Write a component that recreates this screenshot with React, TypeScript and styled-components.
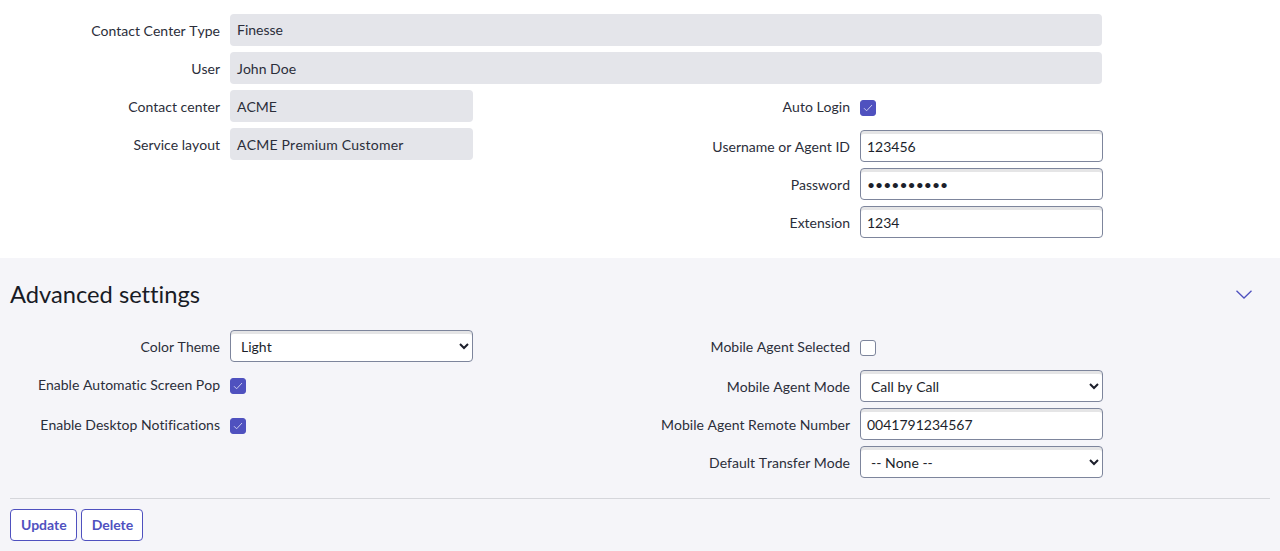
import styled, { createGlobalStyle } from "styled-components";

const GlobalStyle = createGlobalStyle`
  html, body {
    margin: 0;
    padding: 0;
    background: #fff;
  }
  body {
    font-family: Lato, "Liberation Sans", sans-serif;
    font-size: 14px;
    font-kerning: none;
    font-variant-ligatures: none;
    color: #1c1f2b;
  }
`;

const Page = styled.div`
  width: 1280px;
`;

const Primary = styled.section`
  height: 258px;
  box-sizing: border-box;
  padding-top: 14px;
  display: flex;
  flex-direction: column;
  gap: 6px;
`;

const Advanced = styled.section`
  height: 293px;
  box-sizing: border-box;
  background: #f5f5f9;
  padding: 0 10px;
`;

const SectionHead = styled.div`
  height: 72px;
  display: flex;
  align-items: center;
  justify-content: space-between;
  padding-right: 18px;
`;

const Heading = styled.h2`
  margin: 0 0 1px;
  font-size: 23.7px;
  font-weight: 400;
  font-kerning: normal;
  color: #181b25;
`;

const Chevron = styled.svg`
  width: 16px;
  height: 9px;
  fill: none;
  stroke: #4f51bf;
  stroke-width: 1.3;
`;

const Columns = styled.div`
  display: flex;
`;

const LeftColumn = styled.div<{ $inset?: number }>`
  width: ${(p) => 473 - (p.$inset ?? 0)}px;
  display: flex;
  flex-direction: column;
  gap: 6px;
`;

const RightColumn = styled.div`
  display: flex;
  flex-direction: column;
  gap: 6px;
`;

const Row = styled.div<{ $labelWidth: number; $tall?: boolean }>`
  display: grid;
  grid-template-columns: ${(p) => p.$labelWidth}px auto;
  column-gap: 10px;
  align-items: center;
  justify-content: start;
  min-height: ${(p) => (p.$tall ? 34 : 32)}px;
  label {
    padding-top: ${(p) => (p.$tall ? 0 : 1)}px;
  }
`;

const Label = styled.label`
  text-align: right;
  line-height: 20px;
  color: #2b2e3a;
  white-space: nowrap;
`;

const ReadOnly = styled.div<{ $wide?: boolean; $first?: boolean; $tracking?: number }>`
  width: ${(p) => (p.$wide ? 872 : 243)}px;
  height: 32px;
  box-sizing: border-box;
  padding: 0 7px;
  background: #e4e5ea;
  border-radius: 4px;
  line-height: ${(p) => (p.$first ? 32 : 34)}px;
  letter-spacing: ${(p) => p.$tracking ?? 0}px;
  color: #2b2e3a;
`;

const Field = styled.input`
  width: 243px;
  height: 32px;
  box-sizing: border-box;
  margin: 0;
  padding: 1px 6px 0;
  border: 1px solid #7d859c;
  border-radius: 4px;
  background: #fff;
  box-shadow: inset 0 3px 0 #e5e5e6;
  font: inherit;
  font-kerning: none;
  color: #1c1f2b;
  outline: none;
`;

const Dropdown = styled.select`
  width: 243px;
  height: 32px;
  box-sizing: border-box;
  margin: 0;
  padding: 1px 0 0 6px;
  border: 1px solid #7d859c;
  border-radius: 4px;
  background-color: #fff;
  box-shadow: inset 0 3px 0 #e5e5e6;
  font: inherit;
  font-kerning: none;
  color: #1c1f2b;
  outline: none;
`;

const Box = styled.span<{ $checked?: boolean }>`
  width: 16px;
  height: 16px;
  box-sizing: border-box;
  margin-top: 2px;
  display: flex;
  align-items: center;
  justify-content: center;
  border-radius: 3px;
  border: 1px solid ${(p) => (p.$checked ? "#4f51bf" : "#7d859c")};
  background: ${(p) => (p.$checked ? "#4f51bf" : "#fff")};
`;

const Tick = styled.svg`
  width: 10px;
  height: 8px;
  fill: none;
  stroke: #d6d7f0;
  stroke-width: 0.9;
`;

const Divider = styled.hr`
  margin: 20px 0 10px;
  border: 0;
  border-top: 1px solid #d5d6db;
`;

const Actions = styled.div`
  display: flex;
  gap: 4px;
`;

const ActionButton = styled.button`
  height: 32px;
  padding: 0 9px 2px 10px;
  border: 1px solid #4f51bf;
  border-radius: 4px;
  background: #fff;
  font: inherit;
  font-weight: 700;
  font-kerning: normal;
  color: #4f51bf;
`;

function Check({ checked }: { checked?: boolean }) {
  return (
    <Box $checked={checked}>
      {checked && (
        <Tick viewBox="0 0 10 8">
          <path d="M1 4.2 3.6 6.8 9 1" />
        </Tick>
      )}
    </Box>
  );
}

export default function App() {
  return (
    <Page>
      <GlobalStyle />
      <Primary>
        <Row $labelWidth={220}>
          <Label>Contact Center Type</Label>
          <ReadOnly $wide $first>Finesse</ReadOnly>
        </Row>
        <Row $labelWidth={220}>
          <Label>User</Label>
          <ReadOnly $wide>John Doe</ReadOnly>
        </Row>
        <Columns>
          <LeftColumn>
            <Row $labelWidth={220}>
              <Label>Contact center</Label>
              <ReadOnly>ACME</ReadOnly>
            </Row>
            <Row $labelWidth={220}>
              <Label>Service layout</Label>
              <ReadOnly $tracking={0.2}>ACME Premium Customer</ReadOnly>
            </Row>
          </LeftColumn>
          <RightColumn>
            <Row $labelWidth={377} $tall>
              <Label>Auto Login</Label>
              <Check checked />
            </Row>
            <Row $labelWidth={377}>
              <Label>Username or Agent ID</Label>
              <Field defaultValue="123456" />
            </Row>
            <Row $labelWidth={377}>
              <Label>Password</Label>
              <Field type="password" defaultValue="1234567890" />
            </Row>
            <Row $labelWidth={377}>
              <Label>Extension</Label>
              <Field defaultValue="1234" />
            </Row>
          </RightColumn>
        </Columns>
      </Primary>
      <Advanced>
        <SectionHead>
          <Heading>Advanced settings</Heading>
          <Chevron viewBox="0 0 16 9">
            <path d="M.5.8 8 8 15.5.8" />
          </Chevron>
        </SectionHead>
        <Columns>
          <LeftColumn $inset={10}>
            <Row $labelWidth={210}>
              <Label>Color Theme</Label>
              <Dropdown defaultValue="Light">
                <option>Light</option>
                <option>Dark</option>
              </Dropdown>
            </Row>
            <Row $labelWidth={210} $tall>
              <Label>Enable Automatic Screen Pop</Label>
              <Check checked />
            </Row>
            <Row $labelWidth={210} $tall>
              <Label>Enable Desktop Notifications</Label>
              <Check checked />
            </Row>
          </LeftColumn>
          <RightColumn>
            <Row $labelWidth={377} $tall>
              <Label>Mobile Agent Selected</Label>
              <Check />
            </Row>
            <Row $labelWidth={377}>
              <Label>Mobile Agent Mode</Label>
              <Dropdown defaultValue="Call by Call">
                <option>Call by Call</option>
                <option>Nailed Connection</option>
              </Dropdown>
            </Row>
            <Row $labelWidth={377}>
              <Label>Mobile Agent Remote Number</Label>
              <Field defaultValue="0041791234567" />
            </Row>
            <Row $labelWidth={377}>
              <Label>Default Transfer Mode</Label>
              <Dropdown defaultValue="-- None --">
                <option>-- None --</option>
              </Dropdown>
            </Row>
          </RightColumn>
        </Columns>
        <Divider />
        <Actions>
          <ActionButton>Update</ActionButton>
          <ActionButton>Delete</ActionButton>
        </Actions>
      </Advanced>
    </Page>
  );
}
